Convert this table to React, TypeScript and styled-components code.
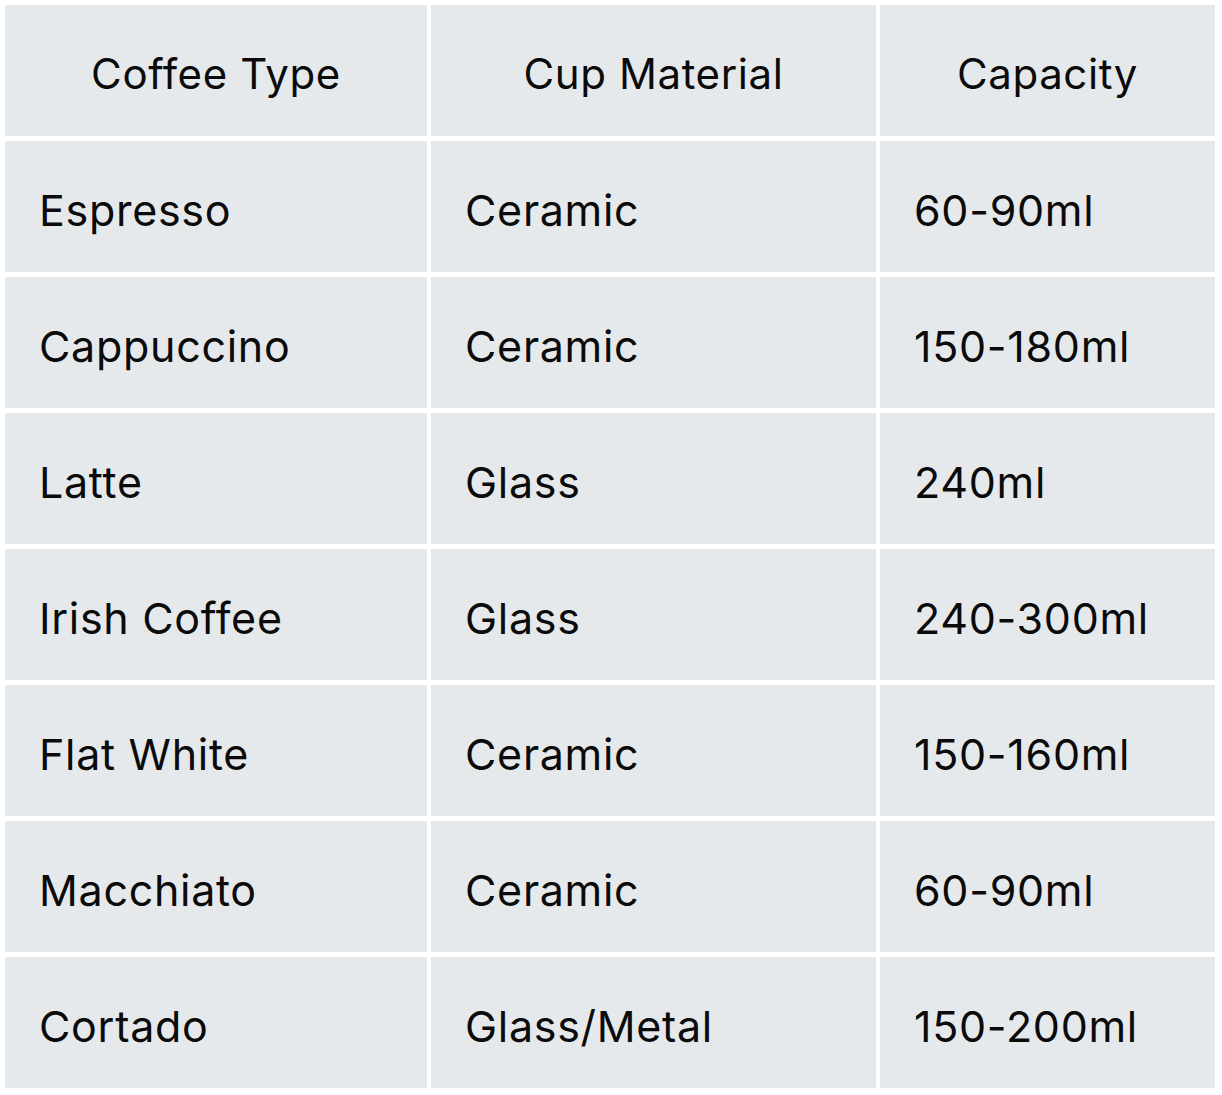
import React from "react";
import styled, { createGlobalStyle } from "styled-components";

const Global = createGlobalStyle`
  html, body { margin: 0; padding: 0; background: #ffffff; }
  body { font-family: Inter, "Noto Sans", sans-serif; color: #0b0b0b; }
`;

const Grid = styled.div`
  display: grid;
  grid-template-columns: 422px 445px 335px;
  grid-auto-rows: 131px;
  column-gap: 4px;
  row-gap: 5px;
  padding: 5px;
  width: max-content;
`;

const Cell = styled.div<{ $head?: boolean }>`
  background: #e6e9ec;
  display: flex;
  align-items: center;
  justify-content: ${(p) => (p.$head ? "center" : "flex-start")};
  padding: 6px ${(p) => (p.$head ? "0" : "34px")} 0;
  font-size: ${(p) => (p.$head ? "42px" : "43px")};
  font-weight: 400;
  letter-spacing: ${(p) => (p.$head ? "0.6px" : "0.7px")};
  white-space: nowrap;
`;

const headers = ["Coffee Type", "Cup Material", "Capacity"];
const rows = [
  ["Espresso", "Ceramic", "60-90ml"],
  ["Cappuccino", "Ceramic", "150-180ml"],
  ["Latte", "Glass", "240ml"],
  ["Irish Coffee", "Glass", "240-300ml"],
  ["Flat White", "Ceramic", "150-160ml"],
  ["Macchiato", "Ceramic", "60-90ml"],
  ["Cortado", "Glass/Metal", "150-200ml"],
];

export default function App() {
  return (
    <>
      <Global />
      <Grid>
        {headers.map((h) => (
          <Cell key={h} $head>
            {h}
          </Cell>
        ))}
        {rows.map((r) =>
          r.map((c, i) => <Cell key={r[0] + i}>{c}</Cell>)
        )}
      </Grid>
    </>
  );
}
